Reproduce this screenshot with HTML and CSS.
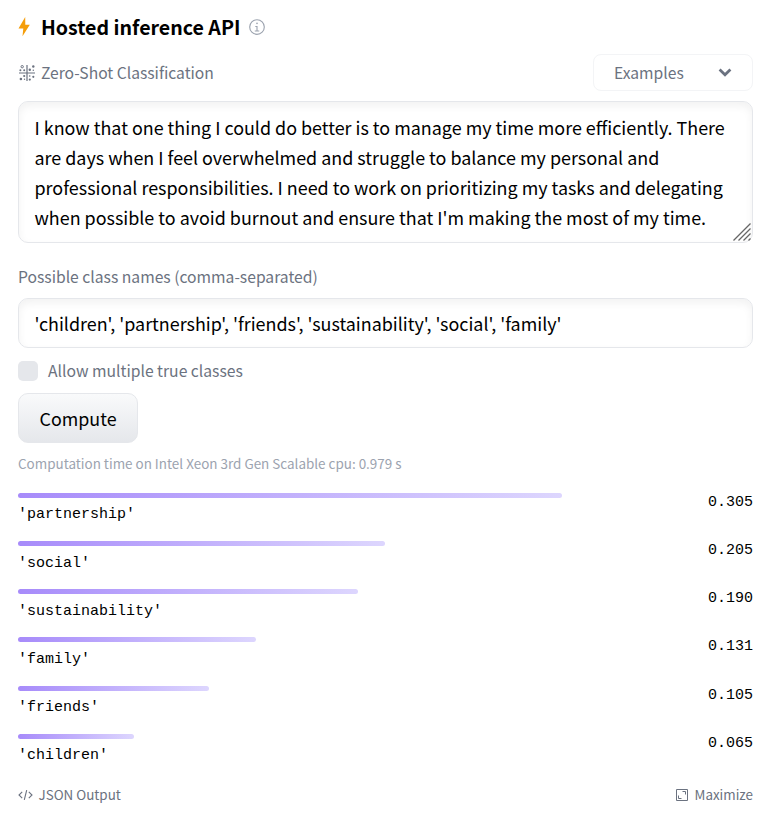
FILE: index.html
```html
<!DOCTYPE html>
<html lang="en">
<head>
<meta charset="utf-8">
<title>Hosted inference API</title>
<link rel="stylesheet" href="styles.css">
</head>
<body>
<main class="widget">
  <header class="title-row">
    <svg class="bolt" viewBox="0 0 12 20"><path d="M6.7 0 0 11.6h4.8L4 19.2 11.3 7.7H6.8z" fill="#f59e0b"/></svg>
    <h1>Hosted inference API</h1>
    <svg class="info" viewBox="0 0 32 32" fill="#9ca3af"><path d="M17 22v-8h-4v2h2v6h-3v2h8v-2z"/><path d="M16 8a1.5 1.5 0 1 0 1.5 1.5A1.5 1.5 0 0 0 16 8z"/><path d="M16 30a14 14 0 1 1 14-14 14 14 0 0 1-14 14zm0-26a12 12 0 1 0 12 12A12 12 0 0 0 16 4z"/></svg>
  </header>
  <div class="task-row">
    <div class="task">
      <svg class="task-icon" viewBox="0 0 16 16" fill="#6b7280"><path d="M7.4 0h1.2v7.4H16v1.2H8.6V16H7.4V8.6H0V7.4h7.4z"/><circle cx="3.2" cy="1.7" r="1.2" fill="none" stroke="#6b7280"/><circle cx="1.4" cy="5.2" r="1"/><circle cx="5.2" cy="5.2" r="1"/><circle cx="14.3" cy="1.5" r="1.2"/><circle cx="10.8" cy="4.8" r="1.2"/><circle cx="14.3" cy="5.3" r=".7"/><circle cx="1.9" cy="14" r="1.3"/><circle cx="5.2" cy="11" r="1.1"/><circle cx="5.5" cy="14.2" r=".7"/><circle cx="10.7" cy="11" r=".8"/><circle cx="14.3" cy="11.8" r="1.1"/><circle cx="10.8" cy="14.6" r="1.1"/></svg>
      <span>Zero-Shot Classification</span>
    </div>
    <div class="examples"><span>Examples</span><svg class="chevron" viewBox="0 0 14 9"><path d="m1.6 1.6 5.4 5.1 5.4-5.1" fill="none" stroke="#6b7280" stroke-width="2.8"/></svg></div>
  </div>
  <div class="field textarea">
    <div>I know that one thing I could do better is to manage my time more efficiently. There</div>
    <div>are days when I feel overwhelmed and struggle to balance my personal and</div>
    <div>professional responsibilities. I need to work on prioritizing my tasks and delegating</div>
    <div>when possible to avoid burnout and ensure that I'm making the most of my time.</div>
    <svg class="grip" viewBox="0 0 18 18"><path d="M.5 17.5 17.5.5M5.5 17.5l12-12M10.5 17.5l7-7M15.5 17.5l2-2" stroke="#666" stroke-width="1.3"/></svg>
  </div>
  <div class="label">Possible class names (comma-separated)</div>
  <div class="field input"><span>'children', 'partnership', 'friends', 'sustainability', 'social', 'family'</span></div>
  <div class="check-row"><i class="checkbox"></i><span>Allow multiple true classes</span></div>
  <button class="compute"><span>Compute</span></button>
  <div class="timing">Computation time on Intel Xeon 3rd Gen Scalable cpu: 0.979 s</div>
  <div class="results">
    <div class="result"><div><div class="bar" style="width:544px"></div><div class="name">'partnership'</div></div><span class="score">0.305</span></div>
    <div class="result"><div><div class="bar" style="width:367px"></div><div class="name">'social'</div></div><span class="score">0.205</span></div>
    <div class="result"><div><div class="bar" style="width:340px"></div><div class="name">'sustainability'</div></div><span class="score">0.190</span></div>
    <div class="result"><div><div class="bar" style="width:238px"></div><div class="name">'family'</div></div><span class="score">0.131</span></div>
    <div class="result"><div><div class="bar" style="width:191px"></div><div class="name">'friends'</div></div><span class="score">0.105</span></div>
    <div class="result"><div><div class="bar" style="width:116px"></div><div class="name">'children'</div></div><span class="score">0.065</span></div>
  </div>
  <footer>
    <div class="action"><svg class="code" viewBox="0 0 15 12" fill="none" stroke="#6b7280" stroke-width="1.1"><path d="M4.2 2.8 1 6l3.2 3.2M10.8 2.8 14 6l-3.2 3.2M8.7 1.2 6.3 10.8"/></svg><span>JSON Output</span></div>
    <div class="action"><svg class="max" viewBox="0 0 12 12" fill="none" stroke="#6b7280"><path d="M.5.5h11v11H.5zM6.5 2.5h3v3M5.5 9.5h-3v-3"/></svg><span>Maximize</span></div>
  </footer>
</main>
</body>
</html>
```

FILE: styles.css
```css
* { box-sizing: border-box; }
body { margin: 0; background: #fff; color: #000; font-family: "Noto Sans CJK SC", "Noto Sans", sans-serif; }
svg { display: block; flex: none; }
.widget { width: 735px; margin-left: 18px; padding-top: 12px; white-space: nowrap; }
.title-row { display: flex; align-items: center; height: 30px; }
.bolt { width: 13px; height: 20px; margin-right: 10px; }
h1 { margin: 0; font-size: 19.6px; line-height: 30px; font-weight: 600; }
.info { width: 18px; height: 18px; margin-left: 8px; }
.task-row { display: flex; justify-content: space-between; align-items: center; height: 37px; margin-top: 12px; color: #6b7280; font-size: 15.65px; line-height: 24px; }
.task { display: flex; align-items: center; }
.task-icon { width: 16px; height: 16px; margin: 0 6px 0 1px; }
.task span, .examples span { margin-top: 1px; }
.examples { display: flex; align-items: center; justify-content: space-between; width: 160px; height: 37px; padding: 0 20px; border: 1px solid #f3f4f6; border-radius: 8px; }
.chevron { width: 14px; height: 9px; }
.field { position: relative; border: 1px solid #e5e7eb; border-radius: 10px; box-shadow: inset 0 4px 8px rgba(0,0,0,.055); font-size: 17.91px; line-height: 30px; padding-left: 15.5px; }
.textarea { height: 142px; margin-top: 10px; padding-top: 10px; }
.grip { position: absolute; right: 1px; bottom: 1px; width: 18px; height: 18px; }
.label { margin-top: 19px; height: 30px; line-height: 30px; font-size: 15.68px; color: #6b7280; }
.input { height: 50px; margin-top: 6px; padding-top: 9px; }
.check-row { display: flex; align-items: center; height: 20px; margin-top: 13px; color: #6b7280; font-size: 15.7px; line-height: 20px; }
.checkbox { width: 20px; height: 20px; margin-right: 10px; border-radius: 5px; background: #e5e7eb; }
.compute { display: flex; align-items: center; width: 120px; height: 50px; margin: 12px 0 0; padding: 0 0 0 20.5px; border: 1px solid #e5e7eb; border-radius: 10px; background: linear-gradient(#f9fafb, #e5e7eb); color: #000; font: 17.88px/30px "Noto Sans CJK SC", "Noto Sans", sans-serif; }
.timing { margin-top: 10px; height: 20px; line-height: 20px; font-size: 13.45px; color: #9ca3af; }
.results { margin-top: 20px; font-family: "Liberation Mono", monospace; font-size: 15px; }
.result { display: flex; justify-content: space-between; height: 48.15px; line-height: 20px; }
.bar { height: 5px; border-radius: 3px; background: linear-gradient(90deg, #a78bfa, #ddd6fe); }
.name { margin-top: 7.4px; }
.score { margin-top: 0; }
footer { display: flex; justify-content: space-between; margin-top: 3px; height: 20px; line-height: 20px; font-size: 13.4px; color: #6b7280; }
.action { display: flex; align-items: center; }
.action span { margin-top: -2px; }
.code { width: 15px; height: 12px; margin-right: 5.5px; }
.max { width: 12px; height: 12px; margin-right: 7px; }
```
